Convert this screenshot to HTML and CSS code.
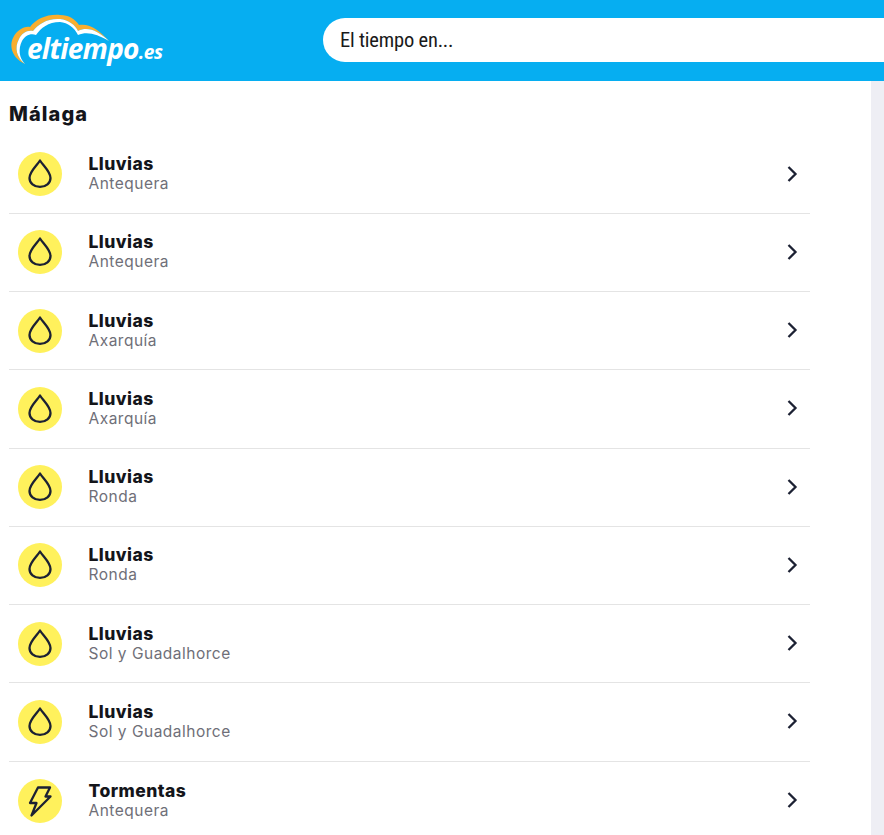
FILE: index.html
```html
<!DOCTYPE html>
<html lang="es">
<head>
<meta charset="utf-8">
<title>Avisos Málaga</title>
<link rel="stylesheet" href="styles.css">
</head>
<body>
<svg class="defs" width="0" height="0" aria-hidden="true">
  <symbol id="drop" viewBox="0 0 44 44"><path d="M22 8.500C19 13.500 11.500 19.500 11.500 26C11.500 31 16 34.800 22 34.800C28 34.800 32.500 31 32.500 26C32.500 19.500 25 13.500 22 8.500Z"/></symbol>
  <symbol id="bolt" viewBox="0 0 44 44"><path d="M20 8.500H32L27.500 17.500H32.500L13.500 36.500L18.500 24H12Z"/></symbol>
  <symbol id="chev" viewBox="0 0 12 18"><path d="M2.500 2L9.500 9L2.500 16"/></symbol>
</svg>
<header class="topbar">
  <a class="logo" href="#">
    <svg class="logo-cloud" viewBox="0 0 170 81" width="170" height="81" aria-hidden="true">
      <path class="cloud-o" d="M25 64C12 58 9 46 13 38C17 30 24 26 30 27C36 19 47 14 60 15C69 15 75 19 79 25C90 23 100 31 109 41C98 31 88 26 78 31C75 25 69 20 60 19C48 18 38 24 33 31C27 30 22 33 19 39C14 48 17 58 25 64Z"/>
      <path class="cloud-w" d="M25 64C17 58 14 48 19 39C22 33 27 30 33 31C38 24 48 18 60 19C69 20 75 25 78 31C88 26 98 31 109 41C97 34 87 31 78 35C74 27 68 23 60 22C48 22 41 28 36 35C30 33 25 36 22 41C18 49 19 58 25 64Z"/>
    </svg>
    <span class="logo-text">eltiempo<span class="logo-es">.es</span></span>
  </a>
  <div class="search">El tiempo en...</div>
</header>
<div class="page">
  <main class="content">
    <h1 class="region">Málaga</h1>
    <ul class="list">
      <li class="row"><span class="badge"><svg class="ico"><use href="#drop"/></svg></span><div class="info"><strong class="kind">Lluvias</strong><span class="zone">Antequera</span></div><svg class="chev"><use href="#chev"/></svg></li>
      <li class="row"><span class="badge"><svg class="ico"><use href="#drop"/></svg></span><div class="info"><strong class="kind">Lluvias</strong><span class="zone">Antequera</span></div><svg class="chev"><use href="#chev"/></svg></li>
      <li class="row"><span class="badge"><svg class="ico"><use href="#drop"/></svg></span><div class="info"><strong class="kind">Lluvias</strong><span class="zone">Axarquía</span></div><svg class="chev"><use href="#chev"/></svg></li>
      <li class="row"><span class="badge"><svg class="ico"><use href="#drop"/></svg></span><div class="info"><strong class="kind">Lluvias</strong><span class="zone">Axarquía</span></div><svg class="chev"><use href="#chev"/></svg></li>
      <li class="row"><span class="badge"><svg class="ico"><use href="#drop"/></svg></span><div class="info"><strong class="kind">Lluvias</strong><span class="zone">Ronda</span></div><svg class="chev"><use href="#chev"/></svg></li>
      <li class="row"><span class="badge"><svg class="ico"><use href="#drop"/></svg></span><div class="info"><strong class="kind">Lluvias</strong><span class="zone">Ronda</span></div><svg class="chev"><use href="#chev"/></svg></li>
      <li class="row"><span class="badge"><svg class="ico"><use href="#drop"/></svg></span><div class="info"><strong class="kind">Lluvias</strong><span class="zone">Sol y Guadalhorce</span></div><svg class="chev"><use href="#chev"/></svg></li>
      <li class="row"><span class="badge"><svg class="ico"><use href="#drop"/></svg></span><div class="info"><strong class="kind">Lluvias</strong><span class="zone">Sol y Guadalhorce</span></div><svg class="chev"><use href="#chev"/></svg></li>
      <li class="row"><span class="badge"><svg class="ico"><use href="#bolt"/></svg></span><div class="info"><strong class="kind">Tormentas</strong><span class="zone">Antequera</span></div><svg class="chev"><use href="#chev"/></svg></li>
    </ul>
  </main>
  <aside class="rail"></aside>
</div>
</body>
</html>
```
FILE: styles.css
```css
* { box-sizing: border-box; }
html, body { margin: 0; height: 100%; overflow: hidden; }
body { background: #fff; color: #14151a; font-family: Inter, "Noto Sans", sans-serif; display: flex; flex-direction: column; }
.defs { display: block; height: 0; }
.topbar { flex: none; height: 81px; background: #06aef1; display: flex; padding-top: 18px; overflow: hidden; }
.logo { position: relative; display: block; flex: none; width: 323px; height: 44px; color: #fff; text-decoration: none; }
.logo-cloud { position: absolute; left: 0; top: -18px; }
.cloud-o { fill: #f9ae2f; }
.cloud-w { fill: #fff; }
.logo-text { position: absolute; left: 27px; top: 13px; font: italic 700 28px/34px "Open Sans", sans-serif; letter-spacing: -0.75px; color: #fff; }
.logo-es { font-size: 19px; letter-spacing: -0.3px; }
.search { flex: none; width: 600px; height: 44px; background: #fff; border-radius: 22px 0 0 22px; padding-left: 17px; font: 400 20.500px/44px Roboto, sans-serif; font-stretch: 85%; letter-spacing: -0.2px; color: #1a1a1a; }
.page { flex: 1; min-height: 0; display: flex; }
.content { flex: none; width: 871px; padding: 0 61px 0 9px; }
.rail { flex: 1; background: #eeeef4; }
.region { margin: 0; padding-top: 21px; font-size: 20px; line-height: 24px; font-weight: 800; letter-spacing: 1.1px; color: #14151a; height: 54.500px; }
.list { list-style: none; margin: 0; padding: 0; }
.row { display: flex; align-items: center; height: 78.250px; padding: 0 9px; border-bottom: 1px solid #e4e4e4; }
.row:last-child { border-bottom: 0; }
.badge { flex: none; width: 44px; height: 44px; border-radius: 50%; background: #fff15c; }
.ico { display: block; width: 44px; height: 44px; fill: none; stroke: #1c2133; stroke-width: 2.300; stroke-linejoin: round; }
.info { flex: 1; margin-left: 26.500px; display: flex; flex-direction: column; margin-top: -2px; }
.kind { font-size: 17.500px; line-height: 21px; font-weight: 800; letter-spacing: 0.45px; color: #14151a; }
.zone { font-size: 15.500px; line-height: 19px; letter-spacing: 0.5px; color: #6f6f78; }
.chev { flex: none; width: 12px; height: 18px; margin-right: 3px; margin-top: -1px; fill: none; stroke: #1c2133; stroke-width: 2.300; }
```
